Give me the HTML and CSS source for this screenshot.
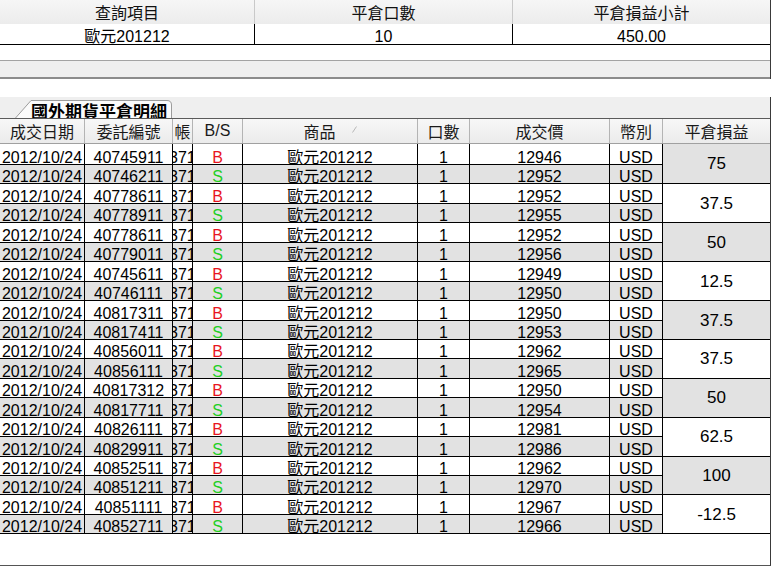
FILE: index.html
```html
<!DOCTYPE html>
<html lang="zh-Hant">
<head>
  <meta charset="UTF-8" />
  <title>國外期貨平倉明細</title>
  <link rel="stylesheet" href="styles.css">
</head>
<body>
  <div class="frame">

    <!-- 平倉彙總 -->
    <div class="summary">
      <div class="sum-head">
        <div class="sum-cell w1">查詢項目</div>
        <div class="sum-cell w2">平倉口數</div>
        <div class="sum-cell w3">平倉損益小計</div>
      </div>
      <div class="sum-row">
        <div class="sum-cell w1"><span>歐元201212</span></div>
        <div class="sum-cell w2"><span>10</span></div>
        <div class="sum-cell w3"><span>450.00</span></div>
      </div>
      <div class="sum-blank"></div>
      <div class="sum-scroll"></div>
    </div>

    <div class="gap"></div>

    <!-- 明細 -->
    <div class="detail">
      <div class="tabbar">
        <div class="tab">
          <svg class="tab-shape" width="158" height="21" viewBox="0 0 158 21">
            <path d="M0.5 21 L16 3.5 L152 3.5 Q156.5 3.5 156.5 8 L156.5 21" fill="#fbfbfb" stroke="#9c9c9c" />
          </svg>
          <span class="tab-label">國外期貨平倉明細</span>
        </div>
      </div>

      <div class="grid-head">
        <div class="hcell">成交日期</div>
        <div class="hcell">委託編號</div>
        <div class="hcell">帳</div>
        <div class="hcell">B/S</div>
        <div class="hcell">商品
          <svg class="sort-mark" width="5" height="7" viewBox="0 0 5 7"><path d="M0.5 6.5 L4.5 0.5" stroke="#b8b8b8" stroke-width="1" /></svg>
        </div>
        <div class="hcell">口數</div>
        <div class="hcell">成交價</div>
        <div class="hcell">幣別</div>
        <div class="hcell last">平倉損益</div>
      </div>

      <div class="rows" id="rows"></div>
    </div>
  </div>

  <script>
    // 買進 / 賣出 配對資料
    const pairs = [
      ["40745911", "12946", "40746211", "12952", "75"],
      ["40778611", "12952", "40778911", "12955", "37.5"],
      ["40778611", "12952", "40779011", "12956", "50"],
      ["40745611", "12949", "40746111", "12950", "12.5"],
      ["40817311", "12950", "40817411", "12953", "37.5"],
      ["40856011", "12962", "40856111", "12965", "37.5"],
      ["40817312", "12950", "40817711", "12954", "50"],
      ["40826111", "12981", "40829911", "12986", "62.5"],
      ["40852511", "12962", "40851211", "12970", "100"],
      ["40851111", "12967", "40852711", "12966", "-12.5"]
    ];

    const rows = document.getElementById("rows");

    function addCell(text, cls) {
      let cell = document.createElement("div");
      cell.className = "cell " + cls;
      let span = document.createElement("span");
      span.innerText = text;
      cell.appendChild(span);
      rows.appendChild(cell);
    }

    function addRow(order, side, price, alt) {
      let bg = alt ? " alt" : "";
      addCell("2012/10/24", bg);
      addCell(order, bg);
      addCell("3712", "acct" + bg);
      addCell(side, (side === "B" ? "buy" : "sell") + bg);
      addCell("歐元201212", bg);
      addCell("1", bg);
      addCell(price, bg);
      addCell("USD", bg);
    }

    pairs.forEach((p, i) => {
      addRow(p[0], "B", p[1], false);
      addCell(p[4], "pnl" + (i % 2 === 0 ? " alt" : ""));
      addRow(p[2], "S", p[3], true);
    });
  </script>
</body>
</html>
```

FILE: styles.css
```css
body {
  margin: 0;
  background: #fff;
  color: #000;
  font-family: "Liberation Sans", "Noto Sans CJK TC", sans-serif;
  font-size: 16px;
}

.frame {
  width: 771px;
  height: 566px;
  display: flex;
  flex-direction: column;
}

/* ---- 彙總表 ---- */
.summary {
  border-right: 1px solid #3a3a3a;
}
.sum-head {
  display: flex;
  height: 24px;
  background: linear-gradient(#f6f6f6, #ececec);
}
.sum-head .sum-cell {
  border-right: 1px solid #c9c9c9;
  align-items: center;
  color: #111;
}
.sum-row {
  display: flex;
  height: 21px;
  box-sizing: border-box;
  border-bottom: 1px solid #000;
}
.sum-row .sum-cell {
  border-right: 1px solid #000;
  align-items: flex-end;
  line-height: 14px;
}
.sum-cell {
  display: flex;
  justify-content: center;
  box-sizing: border-box;
  overflow: hidden;
  white-space: nowrap;
}
.w1 { width: 255px; }
.w2 { width: 258px; }
.w3 { width: 257px; border-right: none !important; }

.sum-blank {
  height: 15px;
}
.sum-scroll {
  height: 19px;
  box-sizing: border-box;
  background: #efefef;
  border-top: 1px solid #a3a3a3;
  border-bottom: 2px solid #8c8c8c;
}

.gap {
  height: 18px;
}

/* ---- 明細表 ---- */
.detail {
  flex: 1;
  border-right: 1px solid #3a3a3a;
  border-bottom: 1px solid #555;
}
.tabbar {
  height: 21px;
  background: #efefef;
}
.tab {
  position: relative;
  width: 158px;
  height: 21px;
  margin-left: 15px;
  overflow: hidden;
}
.tab-shape {
  position: absolute;
  top: 0;
  left: 0;
}
.tab-label {
  position: relative;
  display: block;
  padding: 5px 0 0 16px;
  font-family: "Noto Sans CJK TC", sans-serif;
  font-size: 17px;
  font-weight: bold;
  line-height: 17px;
  white-space: nowrap;
}

.grid-head,
.rows {
  display: grid;
  grid-template-columns: 85px 88px 20px 50px 175px 52px 140px 53px 107px;
}
.grid-head {
  height: 26px;
  box-sizing: border-box;
  border-top: 1px solid #5a5a5a;
  border-bottom: 1px solid #a0a0a0;
  background: linear-gradient(#f7f7f7, #ebebeb);
}
.hcell {
  display: flex;
  justify-content: center;
  align-items: center;
  border-right: 1px solid #b4b4b4;
  color: #1a1a1a;
  overflow: hidden;
  white-space: nowrap;
}
.hcell.last {
  border-right: none;
}
.sort-mark {
  margin-left: 16px;
  margin-bottom: 4px;
}

.rows {
  grid-template-rows: 21px repeat(19, 19.45px);
}
.cell {
  display: flex;
  justify-content: center;
  align-items: flex-end;
  box-sizing: border-box;
  border-right: 1px solid #000;
  border-bottom: 1px solid #000;
  overflow: hidden;
  white-space: nowrap;
  line-height: 13px;
}
.cell.alt {
  background: #e2e2e2;
}
.cell.acct {
  justify-content: flex-start;
}
.cell.acct span {
  margin-left: -4px;
}
.buy {
  color: #e8151f;
}
.sell {
  color: #22cf22;
}
.pnl {
  grid-row: span 2;
  grid-column: 9;
  align-items: center;
  border-right: none;
  font-size: 17px;
  line-height: 17px;
}
```
